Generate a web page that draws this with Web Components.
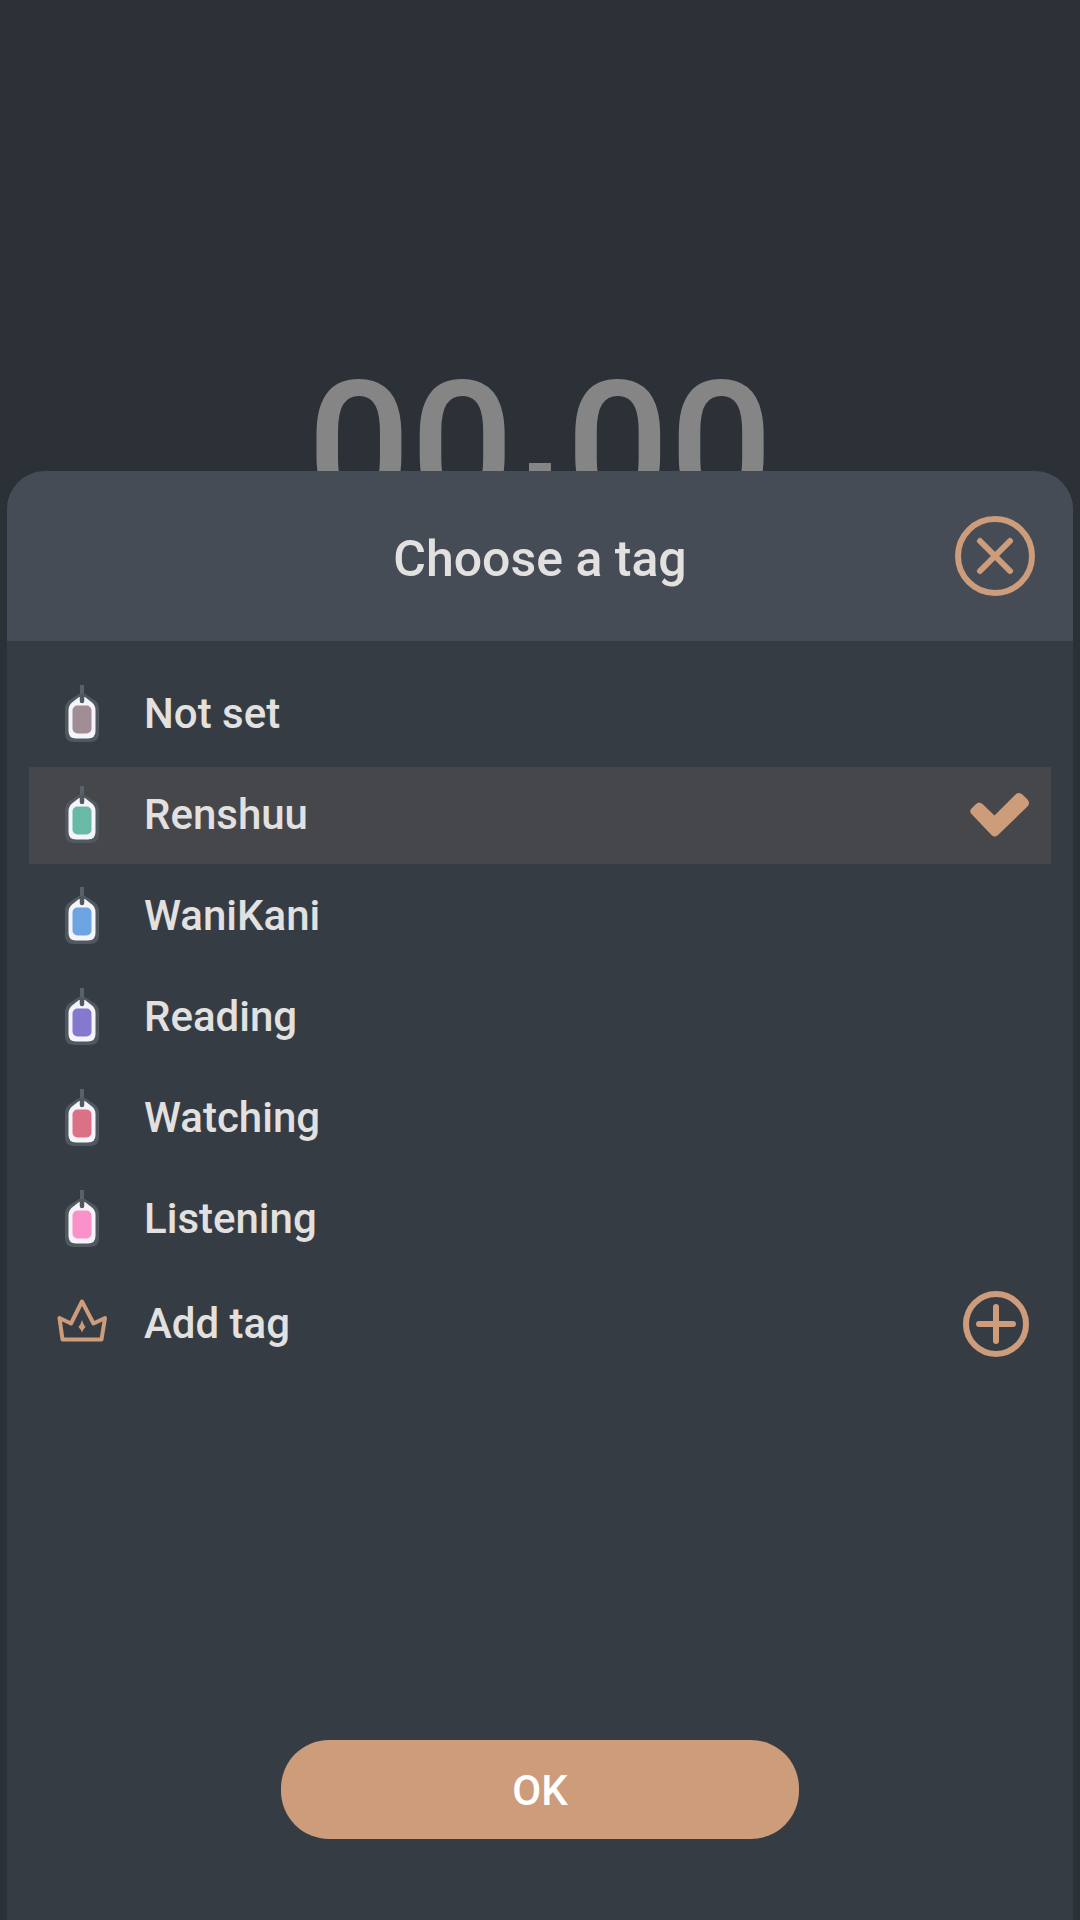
<!DOCTYPE html>
<html lang="en">
<head>
<meta charset="utf-8">
<meta name="viewport" content="width=device-width, initial-scale=1">
<title>Choose a tag</title>
<style>
    body {
        --accent: #cd9c7b;
        --text: #e2e1e0;
        margin: 0;
        background: #2c3137;
        color: var(--text);
        font-family: Roboto, "Liberation Sans", sans-serif;
    }
</style>
</head>
<body>
<tag-app></tag-app>

<script>
// Timer that stays half hidden behind the sheet
class TimerDisplay extends HTMLElement {
    constructor() {
        super();
        this.attachShadow({ mode: 'open' });
        this.shadowRoot.innerHTML = `
            <style>
                :host {
                    display: flex;
                    justify-content: center;
                    align-items: flex-start;
                    box-sizing: border-box;
                    height: 471px;
                    padding-top: 354px;
                    overflow: hidden;
                    color: #858585;
                    font-size: 182px;
                    font-weight: 500;
                    line-height: 188px;
                }
                .colon {
                    padding-top: 40px;
                    font-family: "Liberation Sans", sans-serif;
                    font-size: 156px;
                    font-weight: 700;
                }
            </style>
            <span><slot name="minutes"></slot></span>
            <span class="colon">:</span>
            <span><slot name="seconds"></slot></span>
        `;
    }
}

// Dialog panel: header with title and close button, content, footer
class BottomSheet extends HTMLElement {
    constructor() {
        super();
        this.attachShadow({ mode: 'open' });
        this.shadowRoot.innerHTML = `
            <style>
                :host {
                    display: flex;
                    flex-direction: column;
                    margin: 0 7px;
                    border-radius: 38px 38px 0 0;
                    background: #363c43;
                    overflow: hidden;
                }
                header {
                    display: grid;
                    grid-template-columns: 80px 1fr 80px;
                    align-items: center;
                    height: 170px;
                    padding: 0 38px;
                    background: #464c55;
                }
                h1 {
                    grid-column: 2;
                    margin: 0;
                    padding-top: 6px;
                    font-size: 50px;
                    font-weight: 500;
                    line-height: 64px;
                    text-align: center;
                }
                button {
                    padding: 0;
                    border: 0;
                    background: none;
                    color: var(--accent);
                    cursor: pointer;
                }
                svg { display: block; }
                main { flex: 1; padding: 25px 22px; }
                footer {
                    display: flex;
                    justify-content: center;
                    padding-bottom: 81px;
                }
            </style>
            <header>
                <h1><slot name="title"></slot></h1>
                <button type="button" aria-label="Close">
                    <svg width="80" height="80" viewBox="0 0 80 80" fill="none" stroke="currentColor" stroke-width="6">
                        <circle cx="40" cy="40" r="37"/>
                        <path d="M25 25L55 55M55 25L25 55" stroke-linecap="round"/>
                    </svg>
                </button>
            </header>
            <main><slot></slot></main>
            <footer><slot name="footer"></slot></footer>
        `;
        this.shadowRoot.querySelector('button').addEventListener('click', () => {
            this.dispatchEvent(new CustomEvent('sheet-close', { bubbles: true, composed: true }));
        });
    }
}

// Hanging tag, its fill comes from --tag-color
class TagIcon extends HTMLElement {
    constructor() {
        super();
        this.attachShadow({ mode: 'open' });
        this.shadowRoot.innerHTML = `
            <style>
                :host { display: block; }
                svg { display: block; }
            </style>
            <svg width="34" height="60" viewBox="0 0 34 60" aria-hidden="true">
                <path d="M14 9Q17 7 20 9L30 15.500Q34 19 34 24V48Q34 57 25 57H9Q0 57 0 48V24Q0 19 4 15.500Z" fill="#505860"/>
                <path d="M14 12H20L27 17.500Q30.500 20.500 30.500 25V46Q30.500 53.500 23 53.500H11Q3.500 53.500 3.500 46V25Q3.500 20.500 7 17.500Z" fill="#f4f4fa"/>
                <rect x="7.500" y="20.500" width="19" height="28" rx="5" fill="var(--tag-color)"/>
                <path d="M17 0V12" stroke="#59616a" stroke-width="4"/>
                <path d="M17 11V16" stroke="#505860" stroke-width="4.500" stroke-linecap="round"/>
            </svg>
        `;
    }
}

class TagOption extends HTMLElement {
    constructor() {
        super();
        this.attachShadow({ mode: 'open' });
        this.shadowRoot.innerHTML = `
            <style>
                :host { display: block; }
                label {
                    display: grid;
                    grid-template-columns: 48px 1fr auto;
                    align-items: center;
                    column-gap: 38px;
                    height: 97px;
                    padding: 0 22px 0 29px;
                    font-size: 42px;
                    font-weight: 500;
                    line-height: 52px;
                    cursor: pointer;
                }
                label:has(input:checked) { background: #46474a; }
                tag-icon { justify-self: center; }
                span { padding-bottom: 2px; }
                input {
                    grid-area: 1 / 3;
                    width: 59px;
                    height: 44px;
                    margin: 0;
                    appearance: none;
                    outline: none;
                }
                svg { grid-area: 1 / 3; display: none; pointer-events: none; }
                input:checked + svg { display: block; }
            </style>
            <label>
                <tag-icon></tag-icon>
                <span><slot></slot></span>
                <input type="radio" name="tag">
                <svg width="59" height="46" viewBox="0 0 59 46" aria-hidden="true">
                    <path d="M1.500 21Q-1 18 1.500 15.500L6 11Q9 8 12.500 11L24.500 22.500L45.500 1.500Q49 -1.500 52.500 1.500L57.500 6.500Q60.500 10 57.500 13.500L28 42Q24.500 45 21.500 42Z" fill="var(--accent)"/>
                </svg>
            </label>
        `;
        this.input = this.shadowRoot.querySelector('input');
        this.input.addEventListener('change', () => {
            this.dispatchEvent(new CustomEvent('tag-select', { bubbles: true, composed: true }));
        });
    }

    connectedCallback() {
        this.style.setProperty('--tag-color', this.getAttribute('color'));
        this.input.checked = this.hasAttribute('selected');
    }
}

class TagList extends HTMLElement {
    constructor() {
        super();
        this.attachShadow({ mode: 'open' });
        this.shadowRoot.innerHTML = `
            <style>
                :host { display: flex; flex-direction: column; gap: 4px; }
            </style>
            <slot></slot>
        `;
    }

    connectedCallback() {
        // every option has its own root, so the radios are kept exclusive here
        this.addEventListener('tag-select', (e) => {
            this.querySelectorAll('tag-option').forEach((option) => {
                option.input.checked = option === e.target;
            });
        });
    }
}

class AddTag extends HTMLElement {
    constructor() {
        super();
        this.attachShadow({ mode: 'open' });
        this.shadowRoot.innerHTML = `
            <style>
                :host { display: block; margin-top: 3px; }
                button {
                    display: grid;
                    grid-template-columns: 48px 1fr auto;
                    align-items: center;
                    column-gap: 38px;
                    width: 100%;
                    height: 97px;
                    padding: 0 22px 0 29px;
                    border: 0;
                    background: none;
                    color: inherit;
                    font: inherit;
                    font-size: 42px;
                    font-weight: 500;
                    line-height: 52px;
                    text-align: left;
                    cursor: pointer;
                }
                svg { display: block; color: var(--accent); overflow: visible; }
            </style>
            <button type="button">
                <svg width="48" height="50" viewBox="0 0 48 50" aria-hidden="true">
                    <path d="M1.500 19L13 24.500L24 2.500L35.500 24.500L47 19L43.500 40.500H4.500Z" fill="none" stroke="currentColor" stroke-width="4" stroke-linejoin="round"/>
                    <path d="M24 21Q25 25 27.500 28Q25 30.500 24 33.500Q23 30.500 20.500 28Q23 25 24 21Z" fill="currentColor"/>
                </svg>
                <span><slot></slot></span>
                <svg width="66" height="66" viewBox="0 0 66 66" fill="none" stroke="currentColor" stroke-width="6" aria-hidden="true">
                    <circle cx="33" cy="33" r="30"/>
                    <path d="M33 16V50M16 33H50" stroke-linecap="round"/>
                </svg>
            </button>
        `;
    }
}

class PillButton extends HTMLElement {
    constructor() {
        super();
        this.attachShadow({ mode: 'open' });
        this.shadowRoot.innerHTML = `
            <style>
                :host { display: block; width: 518px; max-width: 80%; }
                button {
                    width: 100%;
                    height: 99px;
                    padding: 2px 0 0;
                    border: 0;
                    border-radius: 48px;
                    background: var(--accent);
                    color: #fff;
                    font: inherit;
                    font-size: 42px;
                    font-weight: 500;
                    cursor: pointer;
                }
            </style>
            <button type="button"><slot></slot></button>
        `;
    }
}

class TagApp extends HTMLElement {
    constructor() {
        super();
        this.attachShadow({ mode: 'open' });
        this.shadowRoot.innerHTML = `
            <style>
                :host { display: flex; flex-direction: column; min-height: 100vh; }
                timer-display { flex: none; }
                bottom-sheet { flex: 1; }
            </style>
            <timer-display>
                <span slot="minutes">00</span>
                <span slot="seconds">00</span>
            </timer-display>
            <bottom-sheet role="dialog" aria-label="Choose a tag">
                <span slot="title">Choose a tag</span>
                <tag-list role="radiogroup" aria-label="Tags">
                    <tag-option color="#a08d96">Not set</tag-option>
                    <tag-option color="#68b9a5" selected>Renshuu</tag-option>
                    <tag-option color="#6ca5e1">WaniKani</tag-option>
                    <tag-option color="#8579cf">Reading</tag-option>
                    <tag-option color="#dc7084">Watching</tag-option>
                    <tag-option color="#fa91c8">Listening</tag-option>
                    <add-tag>Add tag</add-tag>
                </tag-list>
                <pill-button slot="footer">OK</pill-button>
            </bottom-sheet>
        `;
    }
}

customElements.define('timer-display', TimerDisplay);
customElements.define('bottom-sheet', BottomSheet);
customElements.define('tag-icon', TagIcon);
customElements.define('tag-option', TagOption);
customElements.define('tag-list', TagList);
customElements.define('add-tag', AddTag);
customElements.define('pill-button', PillButton);
customElements.define('tag-app', TagApp);
</script>
</body>
</html>
